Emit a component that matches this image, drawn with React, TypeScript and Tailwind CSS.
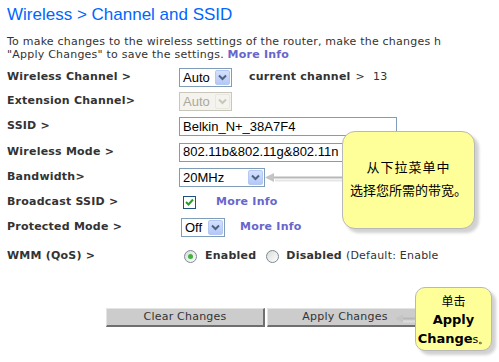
import React from "react";

const Chevron = ({ disabled = false }: { disabled?: boolean }) => (
  <svg width="9" height="7" viewBox="0 0 9 7">
    <path
      d="M1 1.5 L4.5 5 L8 1.5"
      fill="none"
      stroke={disabled ? "#c9c7ba" : "#4d6185"}
      strokeWidth="2"
    />
  </svg>
);

const Select = ({
  value,
  width,
  disabled = false,
}: {
  value: string;
  width: string;
  disabled?: boolean;
}) => (
  <div
    className={`${width} h-[19px] flex items-center justify-between border ${
      disabled ? "border-[#c9c7ba] bg-[#f4f3ee]" : "border-[#7f9db9] bg-white"
    } font-['Liberation_Sans'] text-[13px] tracking-normal`}
  >
    <span className={`pl-[3px] leading-[17px] ${disabled ? "text-[#aca899]" : "text-black"}`}>{value}</span>
    <div
      className={`mr-[1px] w-[15px] h-[15px] rounded-[2px] border flex items-center justify-center ${
        disabled
          ? "border-[#e8e7e0] bg-[#f4f3ee]"
          : "border-[#b5c7f3] bg-gradient-to-b from-[#d4e0fd] to-[#b4c8f6]"
      }`}
    >
      <Chevron disabled={disabled} />
    </div>
  </div>
);

const Input = ({ value, width }: { value: string; width: string }) => (
  <div
    className={`${width} h-[19px] border border-[#7f9db9] bg-white flex items-center font-['Liberation_Sans'] text-[13px] tracking-normal text-black`}
  >
    <span className="pl-[3px]">{value}</span>
  </div>
);

const Radio = ({ checked }: { checked: boolean }) => (
  <div className="w-[13px] h-[13px] rounded-full border border-[#7a8a99] bg-gradient-to-br from-[#dcdcd6] to-white flex items-center justify-center">
    {checked && <div className="w-[5px] h-[5px] rounded-full bg-[#3fb33f]" />}
  </div>
);

const Row = ({
  label,
  h,
  children,
}: {
  label: React.ReactNode;
  h: string;
  children?: React.ReactNode;
}) => (
  <div className={`flex items-center ${h}`}>
    <div className="w-[172px] shrink-0 font-bold text-[#333333]">{label}</div>
    {children}
  </div>
);

export default function App() {
  return (
    <div className="w-[499px] h-[362px] bg-white relative overflow-hidden font-['DejaVu_Sans'] text-[11px] tracking-[0.22px] text-[#333333]">
      <div className="pl-[7px] pt-[5px]">
        <h1 className="font-['Liberation_Sans'] text-[17px] leading-[20px] tracking-normal text-[#0066ff] whitespace-nowrap">
          Wireless &gt; Channel and SSID
        </h1>
        <p className="mt-[10px] leading-[13px] whitespace-nowrap">
          To make changes to the wireless settings of the router, make the changes h
          <br />
          "Apply Changes" to save the settings.{" "}
          <span className="font-bold text-[#6666cc]">More Info</span>
        </p>
        <div className="mt-[4px] flex flex-col whitespace-nowrap">
          <Row label="Wireless Channel >" h="h-[24px]">
            <Select value="Auto" width="w-[53px]" />
            <span className="ml-[17px] font-bold text-[#333333]">current channel</span>
            <span className="ml-[5px]">&gt;</span>
            <span className="ml-[8px]">13</span>
          </Row>
          <Row label="Extension Channel>" h="h-[25px]">
            <Select value="Auto" width="w-[53px]" disabled />
          </Row>
          <Row label="SSID >" h="h-[25px]">
            <Input value="Belkin_N+_38A7F4" width="w-[218px]" />
          </Row>
          <Row label="Wireless Mode >" h="h-[26px]">
            <Input value="802.11b&802.11g&802.11n" width="w-[225px]" />
          </Row>
          <Row label="Bandwidth>" h="h-[25px]">
            <Select value="20MHz" width="w-[86px]" />
          </Row>
          <Row label="Broadcast SSID >" h="h-[24px]">
            <div className="ml-[4px] w-[13px] h-[13px] border border-[#1c5180] bg-white flex items-center justify-center">
              <svg width="9" height="8" viewBox="0 0 9 8">
                <path d="M1 4 L3.5 6.5 L8 1.5" fill="none" stroke="#21a121" strokeWidth="2" />
              </svg>
            </div>
            <span className="ml-[20px] font-bold text-[#6666cc]">More Info</span>
          </Row>
          <Row label="Protected Mode >" h="h-[26px]">
            <div className="ml-[2px]">
              <Select value="Off" width="w-[44px]" />
            </div>
            <span className="ml-[15px] font-bold text-[#6666cc]">More Info</span>
          </Row>
          <Row label="WMM (QoS) >" h="h-[32px]">
            <div className="ml-[5px]">
              <Radio checked />
            </div>
            <span className="ml-[8px] font-bold">Enabled</span>
            <div className="ml-[10px]">
              <Radio checked={false} />
            </div>
            <span className="ml-[7px] font-bold">Disabled</span>
            <span className="ml-[4px]">(Default: Enable</span>
          </Row>
        </div>
        <div className="mt-[36px] ml-[99px] flex gap-[2px] text-[11px] text-[#333333]">
          <div className="w-[159px] h-[19px] bg-[#cccccc] border-t border-l border-t-[#e4e4e4] border-l-[#e4e4e4] border-b-2 border-r-2 border-b-[#6f6f6f] border-r-[#6f6f6f] flex items-center justify-center">
            Clear Changes
          </div>
          <div className="w-[157px] h-[19px] bg-[#cccccc] border-t border-l border-t-[#e4e4e4] border-l-[#e4e4e4] border-b-2 border-r-2 border-b-[#6f6f6f] border-r-[#6f6f6f] flex items-center justify-center">
            Apply Changes
          </div>
        </div>
      </div>

      {/* arrow to bandwidth */}
      <svg className="absolute left-[263px] top-[172px]" width="82" height="12" viewBox="0 0 82 12">
        <path d="M12 8.5 H80" stroke="#e6e6e6" strokeWidth="2" />
        <path d="M4 5.5 H80" stroke="#b8b8b8" strokeWidth="2" />
        <path d="M2 5.5 L11 1 L11 10 Z" fill="#c4c4c4" />
      </svg>

      {/* callout 1 */}
      <div className="absolute left-[342px] top-[131px] w-[133px] h-[98px] rounded-[13px] border border-[#b8b8b8] bg-[#ffff99] shadow-[4px_4px_3px_rgba(0,0,0,0.18)] flex flex-col items-center font-['Noto_Sans_CJK_SC',sans-serif] text-[13px] tracking-normal text-black">
        <div className="mt-[25px] leading-[20px] tracking-[1px]">从下拉菜单中</div>
        <div className="mt-[3px] leading-[20px]">选择您所需的带宽。</div>
      </div>

      {/* arrow to apply */}
      <svg className="absolute left-[393px] top-[313px]" width="24" height="12" viewBox="0 0 24 12">
        <path d="M10 8.5 H23" stroke="#dcdcdc" strokeWidth="2" />
        <path d="M4 5.5 H23" stroke="#b8b8b8" strokeWidth="2" />
        <path d="M2 5.5 L10 1.5 L10 9.5 Z" fill="#c4c4c4" />
      </svg>

      {/* callout 2 */}
      <div className="absolute left-[415px] top-[287px] w-[77px] h-[64px] rounded-[10px] border border-[#b8b8b8] bg-[#ffff99] shadow-[4px_4px_3px_rgba(0,0,0,0.18)] flex flex-col items-center tracking-normal text-black">
        <div className="mt-[4px] leading-[18px] text-[12px] font-['Noto_Sans_CJK_SC',sans-serif]">单击</div>
        <div className="leading-[19px] text-[13px] font-bold">Apply</div>
        <div className="leading-[19px] whitespace-nowrap">
          <span className="text-[13px] font-bold">Change</span>
          <span className="text-[11px]">s。</span>
        </div>
      </div>
    </div>
  );
}
